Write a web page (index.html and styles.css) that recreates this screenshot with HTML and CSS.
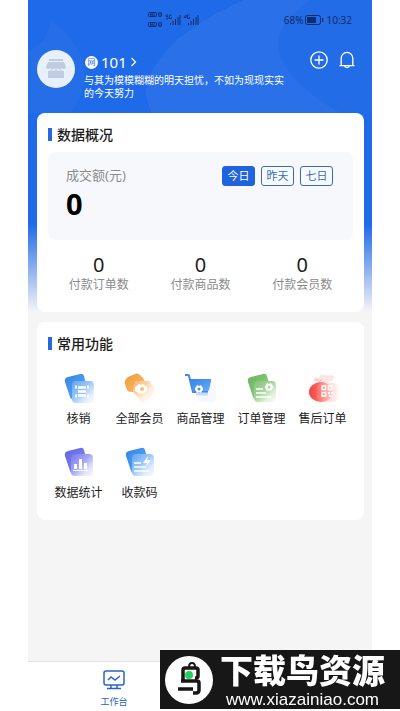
FILE: index.html
```html
<!DOCTYPE html>
<html lang="zh-CN">
<head>
  <meta charset="UTF-8">
  <meta name="viewport" content="width=device-width, initial-scale=1.0">
  <title>工作台</title>
  <link rel="stylesheet" href="styles.css">
</head>
<body>
  <div class="phone">
    <!-- 背景花纹 -->
    <svg class="pattern" viewBox="0 0 344 113" preserveAspectRatio="none" aria-hidden="true">
      <path d="M22 20Q48 38 55 62Q60 92 42 113H0V50Q20 45 22 20Z" fill="#fff" opacity=".03"/>
      <path d="M185 15Q124 50 118 90Q118 102 124 113H312Q252 78 250 45Q252 20 282 0H215Z" fill="#fff" opacity=".05"/>
      <path d="M282 0Q252 20 250 45Q252 78 312 113H344V0Z" fill="#fff" opacity=".02"/>
    </svg>

    <!-- 状态栏 -->
    <div class="status">
      <svg class="signal" width="54" height="18" viewBox="0 0 54 18" aria-hidden="true">
        <g fill="none" stroke="#102c66">
          <rect x=".5" y="1.5" width="8" height="4" rx="1"/>
          <rect x="10.5" y="1.5" width="3" height="4" rx="1"/>
          <rect x=".5" y="11.5" width="8" height="4" rx="1"/>
          <rect x="10.5" y="11.5" width="3" height="4" rx="1"/>
          <path d="M2.5 2v3M4.2 2v3M2.5 3.5h2M6 2v3h1.500M12 2v3M2.500 12v3M4.200 12v3M2.500 13.500h2M6 12v3h1.500M12 12v3" stroke-width=".8"/>
          <path d="M20 4h-2v1.500h2V8h-2M23.500 4h-2v3.500h2V6M38 7V4l-2 2.500h2.500M41.500 4h-2v3.500h2V6" stroke-width=".8"/>
        </g>
        <path d="M22 12h1v2h-1zM24.500 10h1v4h-1zM27 8h1v6h-1zM29.500 6h1v8h-1zM31.500 4h1v10h-1zM40 12h1v2h-1zM42.500 10h1v4h-1zM45 8h1v6h-1zM47.500 6h1v8h-1zM49.500 4h1v10h-1z" fill="#102c66"/>
      </svg>
      <span class="status-right">
        <span>68%</span>
        <svg width="19" height="10" viewBox="0 0 19 10" aria-hidden="true">
          <rect x=".5" y=".5" width="15" height="9" rx="2" fill="none" stroke="#102c66"/>
          <path d="M2 2h9v6H2zM17 3h1.200v4H17z" fill="#102c66"/>
        </svg>
        <span>10:32</span>
      </span>
    </div>

    <!-- 店铺信息 -->
    <header class="profile">
      <div class="avatar">
        <svg width="22" height="20" viewBox="0 0 22 20" aria-hidden="true">
          <path d="M4 0h14v2H4zM3 3h16l2 5c0 2-3 3-4 1-1 2-3 2-4 0-1 2-3 2-4 0-1 2-3 2-4 0-1 2-4 1-4-1z" fill="#c0cce2"/>
          <path d="M3 12q2 0 3-1 2 2 5 0 3 2 5 0 1 1 3 1v7H3z" fill="#c0cce2"/>
        </svg>
      </div>
      <div class="shop">
        <a class="shop-name" href="#">
          <span class="badge">网</span>
          <span>101</span>
          <svg width="7" height="10" viewBox="0 0 7 10" aria-hidden="true"><path d="M1.500 1l4 4-4 4" fill="none" stroke="#fff" stroke-width="1.200"/></svg>
        </a>
        <p class="motto">与其为模模糊糊的明天担忧，不如为现现实实的今天努力</p>
      </div>
      <div class="actions">
        <button type="button" aria-label="添加">
          <svg width="18" height="18" viewBox="0 0 18 18" fill="none" stroke="#fff" stroke-width="1.300"><circle cx="9" cy="9" r="8.200"/><path d="M9 4.500v9M4.500 9h9"/></svg>
        </button>
        <button type="button" aria-label="消息">
          <svg width="18" height="18" viewBox="0 0 18 18" fill="none" stroke="#fff" stroke-width="1.300"><path d="M3.200 14.500V7.500a5.800 6.200 0 0 1 11.600 0v7M1.500 14.700h15M6.500 15.200q2.500 3 5 0"/></svg>
        </button>
      </div>
    </header>

    <main class="content">
      <!-- 数据概况 -->
      <section class="card">
        <h2 class="card-title">数据概况</h2>
        <div class="panel">
          <div>
            <p class="amount-label">成交额(元)</p>
            <p class="amount">0</p>
          </div>
          <div class="ranges">
            <button type="button" class="range active">今日</button>
            <button type="button" class="range">昨天</button>
            <button type="button" class="range">七日</button>
          </div>
        </div>
        <div class="stats">
          <div><strong>0</strong><span>付款订单数</span></div>
          <div><strong>0</strong><span>付款商品数</span></div>
          <div><strong>0</strong><span>付款会员数</span></div>
        </div>
      </section>

      <!-- 常用功能 -->
      <section class="card">
        <h2 class="card-title">常用功能</h2>
        <svg class="defs" width="0" height="0" aria-hidden="true">
          <defs>
            <linearGradient id="blue" x2="1" y2="1"><stop stop-color="#3184e6"/><stop offset="1" stop-color="#68adf7"/></linearGradient>
            <linearGradient id="orange" x2="1" y2="1"><stop stop-color="#ee9b31"/><stop offset="1" stop-color="#f8bd73"/></linearGradient>
            <linearGradient id="green" x2="1" y2="1"><stop stop-color="#69b45d"/><stop offset="1" stop-color="#9bcf8e"/></linearGradient>
            <linearGradient id="red" x2="1"><stop stop-color="#f04440"/><stop offset=".5" stop-color="#ff6f68"/><stop offset="1" stop-color="#ffc9c4"/></linearGradient>
            <linearGradient id="violet" x2="1" y2="1"><stop stop-color="#6265df"/><stop offset="1" stop-color="#888df6"/></linearGradient>
            <linearGradient id="glass-blue" x2="1" y2="1"><stop stop-color="#5fa4f2"/><stop offset=".45" stop-color="#9dc8fa"/><stop offset=".75" stop-color="#e2eeff"/><stop offset="1" stop-color="#f7faff"/></linearGradient>
            <linearGradient id="glass-orange" x2="1" y2="1"><stop stop-color="#f5b264"/><stop offset=".4" stop-color="#fbd9b0"/><stop offset=".65" stop-color="#fff3e6"/><stop offset="1" stop-color="#fffaf5"/></linearGradient>
            <linearGradient id="glass-green" x2="1" y2="1"><stop stop-color="#83c277"/><stop offset=".45" stop-color="#a7d69c"/><stop offset=".75" stop-color="#e2f3de"/><stop offset="1" stop-color="#f8fdf7"/></linearGradient>
            <linearGradient id="glass-red" x2="1"><stop stop-color="#ff9089" stop-opacity=".3"/><stop offset="1" stop-color="#fff1ef" stop-opacity=".8"/></linearGradient>
            <linearGradient id="glass-violet" x2="1" y2="1"><stop stop-color="#767aec"/><stop offset=".45" stop-color="#a2a6f7"/><stop offset=".75" stop-color="#e3e4ff"/><stop offset="1" stop-color="#f8f8ff"/></linearGradient>
          </defs>
        </svg>
        <nav class="functions">
          <a href="#">
            <svg viewBox="0 0 32 32" aria-hidden="true">
              <path d="M5 5L17 2q3-1 4 2l4 15q1 3-2 4L11 27q-3 1-4-2L2 10q-1-4 3-5z" fill="url(#blue)"/>
              <rect x="9" y="9" width="22" height="22" rx="4" fill="url(#glass-blue)"/>
              <path d="M15 15.500h8M15 19.500h8M15 23.500h8" stroke="#fff" stroke-width="2.500"/>
              <path d="M13 13.500v3M25 13.500v3M13 22.500v3M25 22.500v3" stroke="#fff" stroke-width="2"/>
              <path d="M15 17.500h8M15 21.500h8" stroke="#91bdf8" stroke-width=".8"/>
            </svg>
            <span>核销</span>
          </a>
          <a href="#">
            <svg viewBox="0 0 32 32" aria-hidden="true">
              <path d="M4 5l7-3q2-1 4 0l4 4q2 2 1 4l-2 8q-1 2-3 2H7q-3 0-4-2L1 12q-1-2 1-5z" fill="url(#orange)"/>
              <path d="M11 9h14l6 8q1 2-1 4l-8 9q-2 2-4 0l-8-9q-2-2-1-4z" fill="url(#glass-orange)"/>
              <path d="M15 12l2 1 2-1 2 2 2 1v4l-2 1-2 2-2-1-2 1-2-2-2-1v-4l2-1z" fill="#fff"/>
              <circle cx="18" cy="17" r="2" fill="#f9bd7b"/>
            </svg>
            <span>全部会员</span>
          </a>
          <a href="#">
            <svg viewBox="0 0 32 32" aria-hidden="true">
              <rect x="13" y="13" width="18" height="17" rx="4" fill="#f5f9ff"/>
              <path d="M0 3h3q1 0 1 1l4 16h15" fill="none" stroke="#4189e6" stroke-width="2"/>
              <path d="M5 7h20q2 0 1 2l-2 9q0 1-2 1H8z" fill="url(#blue)"/>
              <path d="M11 22h12" stroke="#c5ddfb" stroke-width="3"/>
              <path d="M12 13l2 1 2-1 1 2 1 1v2l-1 1-1 2-2-1-2 1-1-2-1-1v-2l1-1z" fill="#fff"/>
              <circle cx="14" cy="17" r="1.500" fill="#4a91eb"/>
            </svg>
            <span>商品管理</span>
          </a>
          <a href="#">
            <svg viewBox="0 0 32 32" aria-hidden="true">
              <path d="M5 5L17 2q3-1 4 2l4 15q1 3-2 4L11 27q-3 1-4-2L2 10q-1-4 3-5z" fill="url(#green)"/>
              <rect x="8" y="9" width="22" height="21" rx="4" fill="url(#glass-green)"/>
              <path d="M10 17h7M10 21h10M10 25h15" stroke="#fff" stroke-width="1.500"/>
              <path d="M21 11l2 1 2-1 1 2 1 1v2l-1 1-1 2-2-1-2 1-1-2-1-1v-2l1-1z" fill="#fff"/>
              <circle cx="23" cy="15" r="1.500" fill="#a9d79f"/>
            </svg>
            <span>订单管理</span>
          </a>
          <a href="#">
            <svg viewBox="0 0 32 32" aria-hidden="true">
              <path d="M8 8q-2-3 1-3l3 1 1-3q4-1 8 1l4-1q3 1 1 5l-6 3z" fill="#fde5e2"/>
              <path d="M11 11l4-4M7 8h5" stroke="#f9b2ad"/>
              <ellipse cx="14" cy="20" rx="12" ry="10" fill="url(#red)"/>
              <rect x="10" y="11" width="21" height="19" rx="5" fill="url(#glass-red)"/>
              <path d="M15 14h3.500v3.500H15zM21.500 14H25v3.500h-3.500zM15 20.500h3.500V24H15z" fill="none" stroke="#fff" stroke-width="1.400"/>
              <path d="M21 20h2v2h-2zM24 20h2v2h-2zM22 23h2v2h-2zM25 23h1v2h-1z" fill="#fff"/>
            </svg>
            <span>售后订单</span>
          </a>
          <a href="#">
            <svg viewBox="0 0 32 32" aria-hidden="true">
              <path d="M5 5L17 2q3-1 4 2l4 15q1 3-2 4L11 27q-3 1-4-2L2 10q-1-4 3-5z" fill="url(#violet)"/>
              <rect x="8" y="8" width="22" height="22" rx="4" fill="url(#glass-violet)"/>
              <path d="M11 18h3v5h-3zM16 13h3v10h-3zM21 17h3v6h-3zM10 24h15v1H10z" fill="#fff"/>
            </svg>
            <span>数据统计</span>
          </a>
          <a href="#">
            <svg viewBox="0 0 32 32" aria-hidden="true">
              <path d="M5 5L17 2q3-1 4 2l4 15q1 3-2 4L11 27q-3 1-4-2L2 10q-1-4 3-5z" fill="url(#blue)"/>
              <rect x="8" y="8" width="22" height="22" rx="4" fill="url(#glass-blue)"/>
              <path d="M10 17h7M10 21h12M10 25h15" stroke="#fff" stroke-width="1.500"/>
              <path d="M24 10l-5 7h4l-1 4 5-7h-4z" fill="#fff"/>
            </svg>
            <span>收款码</span>
          </a>
        </nav>
      </section>
    </main>

    <!-- 底部导航 -->
    <nav class="tabbar">
      <a class="tab" href="#">
        <svg width="22" height="20" viewBox="0 0 22 20" fill="none" stroke="#2864c5" stroke-width="1.500" aria-hidden="true"><rect x="1" y="1" width="20" height="14" rx="2"/><path d="M5 10l3-3 4 3 5-4M8 15v3M14 15v3M4 18.500h14"/></svg>
        <span>工作台</span>
      </a>
    </nav>
  </div>

  <!-- 站点标识 -->
  <aside class="site-mark">
    <svg width="48" height="48" viewBox="0 0 48 48" aria-hidden="true">
      <circle cx="24" cy="24" r="24" fill="#fff"/>
      <path d="M18 25V14q0-2 2-2h11q2 0 2 2v6q0 2-3 2M16 25h16q2 0 2 2v7q0 3-3 3h-3M13 33h15" fill="none" stroke="#171717" stroke-width="3.500"/>
      <path d="M24 11q0-4 3-4t3 4" fill="none" stroke="#171717" stroke-width="2"/>
      <circle cx="24" cy="19" r="4" fill="#26cf60"/>
    </svg>
    <div class="site-text">
      <strong>下载鸟资源</strong>
      <span>www.xiazainiao.com</span>
    </div>
  </aside>
</body>
</html>
```
FILE: styles.css
```css
/* 基本样式 */
* {
  box-sizing: border-box;
}
body {
  margin: 0;
  background: #fff;
  font-family: "Noto Sans", "Noto Sans CJK SC", sans-serif;
  color: #1c1c1c;
}
p, h2 {
  margin: 0;
}
a {
  color: inherit;
  text-decoration: none;
}
button {
  font-family: inherit;
  cursor: pointer;
}
.phone {
  position: relative;
  display: flex;
  flex-direction: column;
  min-height: 100vh;
  margin: 0 28px;
  background: linear-gradient(#1f6ae8 0, #1f6ae8 224px, #f5f5f5 312px);
}
.pattern {
  position: absolute;
  top: 0;
  left: 0;
  width: 100%;
  height: 113px;
}

/* 状态栏 */
.status {
  position: relative;
  display: flex;
  justify-content: space-between;
  align-items: center;
  height: 40px;
  padding: 0 20px 0 120px;
  font-size: 10px;
  color: #102c66;
}
.status-right {
  display: flex;
  align-items: center;
  gap: 2px;
}

/* 店铺信息 */
.profile {
  position: relative;
  display: flex;
  align-items: flex-start;
  height: 73px;
  padding: 10px 16px 0 9px;
  color: #fff;
}
.avatar {
  display: flex;
  flex: none;
  align-items: center;
  justify-content: center;
  width: 38px;
  height: 38px;
  border-radius: 50%;
  background: #e8f0fb;
}
.shop {
  flex: 1;
  padding: 0 20px 0 9px;
}
.shop-name {
  display: flex;
  align-items: center;
  gap: 3px;
  height: 24px;
  padding-left: 1px;
  font-size: 15px;
}
.badge {
  width: 13px;
  height: 13px;
  border-radius: 50%;
  background: #fff;
  color: #1f6ae8;
  font-size: 8px;
  line-height: 12px;
  text-align: center;
}
.motto {
  font-size: 10px;
  line-height: 13px;
}
.actions {
  display: flex;
  gap: 10px;
}
.actions button {
  height: 20px;
  padding: 0;
  border: none;
  background: none;
}
.actions svg {
  display: block;
}

/* 卡片 */
.content {
  position: relative;
  display: flex;
  flex: 1;
  flex-direction: column;
  gap: 10px;
  padding: 0 8px 0 9px;
}
.card {
  padding: 12px 11px 18px;
  border-radius: 8px;
  background: #fff;
}
.card-title {
  display: flex;
  align-items: center;
  gap: 5px;
  height: 18px;
  font-size: 14px;
  font-weight: 500;
}
.card-title::before {
  content: "";
  width: 4px;
  height: 13px;
  background: #2669df;
}
.panel {
  display: flex;
  justify-content: space-between;
  align-items: flex-start;
  height: 88px;
  margin-top: 9px;
  padding: 14px 20px 0 18px;
  border-radius: 8px;
  background: #f7f8fc;
}
.amount-label {
  font-size: 13px;
  line-height: 18px;
  color: #8b8b8b;
}
.amount {
  font-size: 29px;
  font-weight: 700;
  line-height: 40px;
  color: #000;
}
.ranges {
  display: flex;
  gap: 6px;
}
.range {
  width: 33px;
  height: 20px;
  padding: 0;
  border: 1px solid #386dbc;
  border-radius: 3px;
  background: #f7fbff;
  color: #386dbc;
  font-size: 11px;
  line-height: 18px;
}
.range.active {
  border-color: #1f64dd;
  background: #1f64dd;
  color: #fff;
}
.stats {
  display: grid;
  grid-template-columns: repeat(3, 1fr);
  padding-top: 13px;
  text-align: center;
}
.stats strong, .stats span {
  display: block;
}
.stats strong {
  font-size: 20px;
  font-weight: 400;
  line-height: 23px;
}
.stats span {
  font-size: 12px;
  line-height: 18px;
  color: #8b8b8b;
}

/* 功能入口 */
.defs {
  position: absolute;
}
.functions {
  display: grid;
  grid-template-columns: repeat(5, 1fr);
  row-gap: 18px;
  padding-top: 20px;
  font-size: 12px;
  line-height: 18px;
  white-space: nowrap;
}
.functions a {
  display: flex;
  flex-direction: column;
  align-items: center;
  gap: 6px;
}
.functions svg {
  width: 32px;
  height: 32px;
}

/* 底部导航 */
.tabbar {
  display: flex;
  height: 50px;
  border-top: 1px solid #e2e2e2;
  background: #fff;
}
.tab {
  display: flex;
  flex-direction: column;
  align-items: center;
  gap: 6px;
  width: 50%;
  padding-top: 8px;
  color: #2864c5;
  font-size: 9px;
  line-height: 12px;
}

/* 站点标识 */
.site-mark {
  position: fixed;
  right: 0;
  bottom: 2px;
  display: flex;
  align-items: center;
  gap: 7px;
  width: 240px;
  height: 59px;
  padding-left: 5px;
  background: #171717;
  color: #fff;
}
.site-text {
  display: flex;
  flex-direction: column;
  align-items: center;
}
.site-text strong {
  font-size: 33px;
  font-weight: 900;
  line-height: 40px;
}
.site-text span {
  font-family: "Liberation Sans", sans-serif;
  font-size: 17px;
  line-height: 18px;
}
```
